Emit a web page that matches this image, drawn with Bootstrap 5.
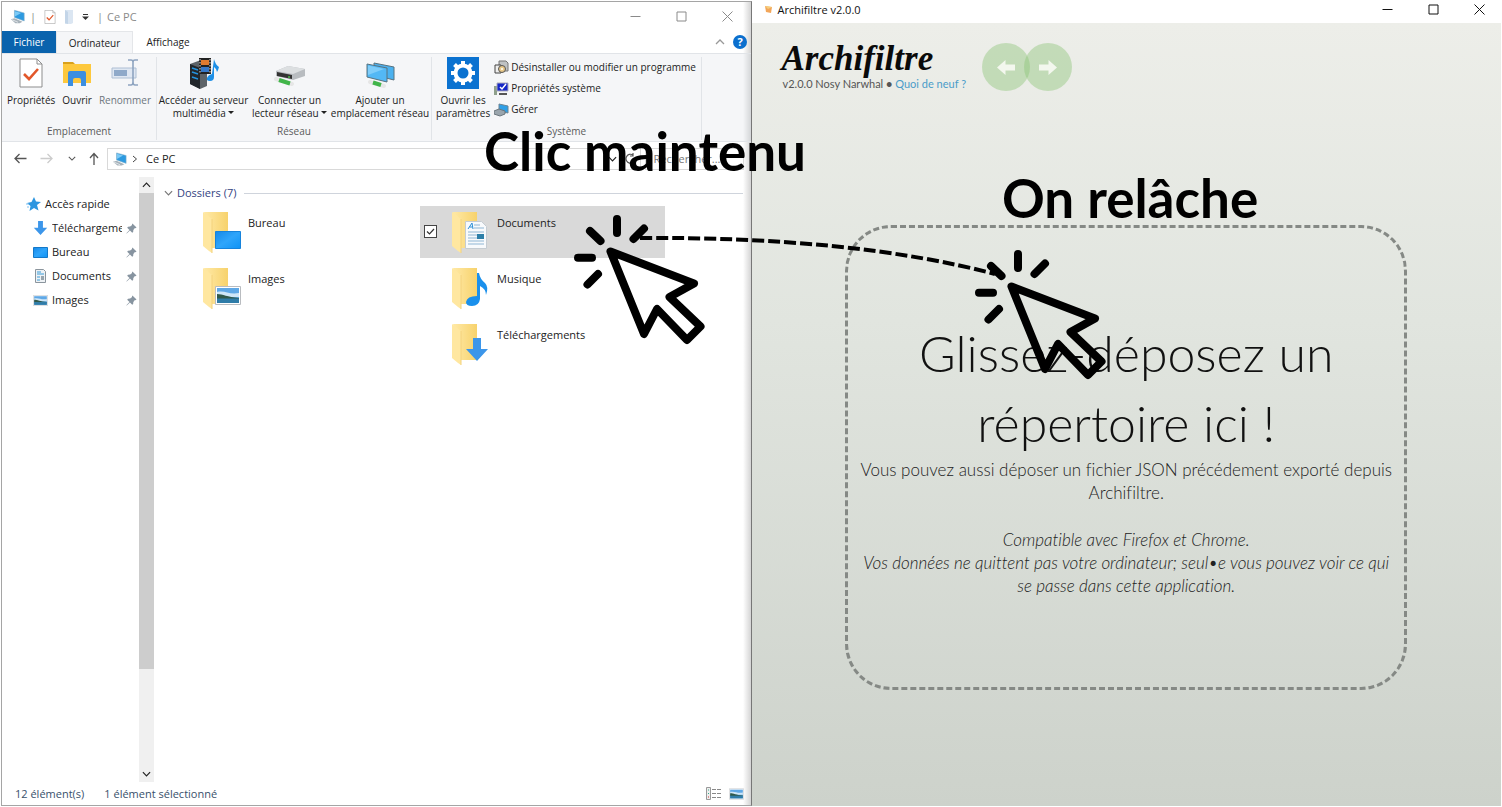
<!DOCTYPE html>
<html lang="fr">
<head>
<meta charset="utf-8">
<meta name="viewport" content="width=device-width, initial-scale=1">
<title>Archifiltre – glisser-déposer un répertoire</title>
<link href="https://cdn.jsdelivr.net/npm/bootstrap@5.3.0/dist/css/bootstrap.min.css" rel="stylesheet">
<style>
  body { font-family: "Open Sans", "Noto Sans", sans-serif; font-size: 11px; line-height: 16px; color: #222; background: #fff; }
  button { border: 0; background: none; padding: 0; color: inherit; }
  svg { display: block; flex: none; }
  a { text-decoration: none; color: inherit; }
  .screen { height: 100vh; padding: 0 0 1px 1px; }

  /* Explorateur */
  .explorer { border: 1px solid #a5a5a5; border-right-color: #777; margin-top: 1px; background: linear-gradient(to left, #d4d4d4, #fff 8px); }
  .titlebar { height: 29px; color: #8a8a8a; }
  .win-btn { width: 46px; height: 18px; display: grid; place-items: center; }
  .tabs { height: 22px; font-size: 10px; }
  .tab-item { display: grid; place-items: center; height: 22px; }
  .tab-file { width: 54px; background: #0a63ad; color: #fff; }
  .tab-on { width: 77px; background: #f5f6f8; border: 1px solid #e4e6e9; border-bottom: 0; }
  .tab-view { width: 70px; }
  .ribbon { height: 89px; font-size: 10px; line-height: 13px; background: linear-gradient(to left, #d4d6d8, #f5f6f8 8px); border: solid #e1e4e8; border-width: 1px 0; padding-top: 3px; }
  .rgroup { border-right: 1px solid #e1e4e8; height: 83px; }
  .rgroup-name { color: #5b5b5b; height: 15px; }
  .rbtn { display: flex; flex-direction: column; align-items: center; white-space: nowrap; }
  .rbtn svg { margin-bottom: 5px; }
  .g-place { width: 155px; } .g-net { width: 275px; } .g-sys { width: 270px; }
  .rline { height: 21px; gap: 2px; white-space: nowrap; }
  .caret-s { display: inline-block; border: 3px solid transparent; border-top-color: #222; border-bottom: 0; vertical-align: 3px; }
  .addr-row { height: 33px; padding: 0 7px 0 11px; }
  .addr-nav { width: 86px; color: #555; }
  .field-box { height: 22px; border: 1px solid #d9d9d9; background: #fff; }
  .search-box { width: 99px; color: #777; padding: 0 8px; outline: 0; }
  .search-box::placeholder { color: #777; }
  .panes { min-height: 0; padding-top: 2px; }
  .side { width: 136px; padding-top: 15px; }
  .side-item { height: 24px; gap: 4px; padding: 0 4px 0 31px; }
  .side-top { padding-left: 24px; }
  .side-name { overflow: hidden; white-space: nowrap; width: 70px; flex: none; }
  .scroll-v { width: 15px; background: #f0f0f0; margin-left: 1px; }
  .scroll-v button { height: 16px; display: grid; place-items: center; flex: none; }
  .thumb { background: #cdcdcd; height: 83%; }
  .files { padding: 6px 8px 0 10px; }
  .files h2 { font-size: 11px; line-height: 20px; color: #34437f; margin: 0; font-weight: 400; }
  .files hr { margin: 0; border-color: #cfd4dc; opacity: 1; }
  .tiles { display: grid; grid-template-columns: repeat(2, 245px); gap: 4px; padding: 3px 0 0 7px; }
  .tile { height: 52px; padding: 6px 0 0 4px; }
  .tile-on { background: #d9d9d9; }
  .tile-check { width: 13px; height: 13px; margin: 13px 15px 0 0; appearance: none; flex: none; }
  .tile-check:checked { border: 1px solid #444; background: #fff url("data:image/svg+xml,%3Csvg xmlns='http://www.w3.org/2000/svg' viewBox='0 0 11 11'%3E%3Cpath d='M2 5.5l2.5 2.5 4.5-5' fill='none' stroke='%23333' stroke-width='1.2'/%3E%3C/svg%3E"); }
  .tile span { padding-top: 3px; margin-left: 7px; }
  .tile-last { grid-column: 2; }
  .status { height: 23px; color: #39506b; padding: 0 7px 0 13px; }

  /* Archifiltre */
  .app-bar { height: 23px; background: #fff; color: #111; padding-bottom: 4px; }
  .app-bar > svg { margin: 0 5px 0 12px; }
  .app-body { background: linear-gradient(#edeee9, #e1e5df 38%, #cdd2cb); margin-right: 1px; }
  .app-font { font-family: Lato, "Open Sans", sans-serif; font-variant-ligatures: none; }
  .brand-name { font: italic 900 35px/36px "Liberation Serif", serif; color: #0a0a0a; margin: 0; }
  .brand-box { padding: 18px 0 0 30px; }
  .brand-sub { font-size: 11px; line-height: 14px; color: #555; padding-left: 1px; }
  .brand-sub a { color: #4a9cc9; }
  .round { width: 48px; height: 48px; border-radius: 50%; background: rgba(139, 195, 116, .42); display: grid; place-items: center; }
  .round + .round { margin-left: -6px; }
  .drop { width: 75%; height: 465px; margin: 134px auto 0; border: 3px dashed #858985; border-radius: 46px; text-align: center; color: #222; }
  .drop h1 { font-size: 50px; line-height: 70px; font-weight: 300; color: #111; margin: 0; }
  .drop p { font-size: 17px; font-weight: 300; line-height: 23px; margin: 0 0 24px; white-space: nowrap; }
  .drop p:last-child { margin: 0; }

  .guide { position: absolute; inset: 0; width: 100%; height: 100%; pointer-events: none; }
  .guide text { font: 700 53px Lato, sans-serif; }
</style>
</head>
<body>
<svg width="0" height="0" class="position-absolute" aria-hidden="true">
  <defs>
    <linearGradient id="gf" x1="0" x2="1"><stop offset="0" stop-color="#ffe9a6"/><stop offset="1" stop-color="#f7d26c"/></linearGradient>
    <linearGradient id="gb" x2="1" y2="1"><stop offset="0" stop-color="#1689e8"/><stop offset=".5" stop-color="#2fa5fb"/><stop offset="1" stop-color="#0f93f5"/></linearGradient>
    <symbol id="folder" viewBox="0 0 38 42"><path d="M1 0h24v36H9z" fill="url(#gf)"/><path d="M0 0l9 7v34l-3-2-6-5z" fill="#ffe7a0"/><path d="M9 7v34" stroke="#f3d27c"/></symbol>
    <symbol id="pic" viewBox="0 0 26 19"><path fill="#fff" stroke="#b9bcc0" d="M.5.5h25v18H.5z"/><path fill="#5fa8e6" d="M2 2h22v15H2z"/><path fill="#cfe6f7" d="M2 6c8-2 12 3 22 1v4H2z"/><path fill="#31594a" d="M2 8c6 0 10 3 22 4v1H2z"/><path fill="#2f7ca8" d="M2 12.500h22V17H2z"/></symbol>
    <symbol id="pc" viewBox="0 0 18 16"><path d="M5 1l11 3v9L5 9z" fill="#2d9ae0" stroke="#8fb2c6" stroke-width=".6"/><path d="M5.500 2l7 2-7 4z" fill="#7ccaf6"/><path d="M1 11l4-1 9 4-3 1.500H6z" fill="#a7b2ba"/><path d="M2 11.500l7 3" stroke="#e6eaed"/></symbol>
    <symbol id="note-check" viewBox="0 0 24 30"><path d="M1 1h17l5 5v23H1z" fill="#fff" stroke="#8d8d8d"/><path d="M18 1v5h5" fill="none" stroke="#8d8d8d"/><path d="M5 16l5 5 9-10" fill="none" stroke="#e2572a" stroke-width="2.600"/></symbol>
    <symbol id="down" viewBox="0 0 22 23"><path d="M7 0h8v11h7L11 23 0 11h7z" fill="#3c96ea"/></symbol>
    <symbol id="pin" viewBox="0 0 12 12"><path d="M7 .5L11.500 5l-1.300.6-.5-.2L8 7.500l-.2 2.300-1 .9-2.500-2.600L.8 11.500l-.4-.4L3.800 7.600 1.300 5.200l.9-1 2.300-.3 2.200-1.700-.2-.5z" fill="#8794a0"/></symbol>
    <symbol id="mini" viewBox="0 0 11 11"><path d="M.5 5.500h10" fill="none" stroke="currentColor"/></symbol>
    <symbol id="maxi" viewBox="0 0 11 11"><path d="M1 1h9v9H1z" fill="none" stroke="currentColor"/></symbol>
    <symbol id="clos" viewBox="0 0 11 11"><path d="M.5.5l10 10M10.500.5l-10 10" fill="none" stroke="currentColor"/></symbol>
    <symbol id="chev" viewBox="0 0 10 6"><path d="M1 1l4 4 4-4" fill="none" stroke="currentColor" stroke-width="1.300"/></symbol>
    <symbol id="arr" viewBox="0 0 13 11"><path d="M13 5.500H1.500M6 1L1.500 5.500 6 10" fill="none" stroke="currentColor" stroke-width="1.300"/></symbol>
    <symbol id="bigarr" viewBox="0 0 18 15"><path d="M0 7.500L8.500 0v4.500H18v6H8.500V15z" fill="#f3f7ee"/></symbol>
    <symbol id="click" viewBox="570 210 140 140" overflow="visible"><g fill="none" stroke="#000" stroke-width="8" stroke-linecap="round" stroke-linejoin="round"><path d="M610.500 251.500L694 283.500l-24.500 13.500 31 29.500-13.500 13.500-30-31-13 25z"/><path d="M617 219v14M644 228.500L633.500 239M590 231l10.500 10M578 257.700h14M598 274l-10.500 10.500"/></g></symbol>
  </defs>
</svg>

<main class="screen d-flex position-relative">
  <section class="explorer w-50 d-flex flex-column flex-shrink-0" aria-label="Explorateur de fichiers">
    <header class="titlebar d-flex align-items-center">
      <svg width="16" height="15" class="ms-2"><use href="#pc"/></svg>
      <span class="ms-1">|</span>
      <svg width="12" height="14" class="ms-2"><use href="#note-check"/></svg>
      <svg width="10" height="14" class="ms-2"><path d="M1 0h8v13l-2 1H1z" fill="#dbe6f2"/><path d="M1 0l3 2v12l-3-1z" fill="#c3d5e8"/></svg>
      <svg width="7" height="7" class="ms-2"><path d="M1 1.500h5" stroke="#333"/><path d="M0 3.500h7L3.500 7z" fill="#333"/></svg>
      <span class="ms-2">|</span><span class="ms-1">Ce PC</span>
      <div class="ms-auto d-flex">
        <button class="win-btn" aria-label="Réduire"><svg width="11" height="11"><use href="#mini"/></svg></button>
        <button class="win-btn" aria-label="Agrandir"><svg width="11" height="11"><use href="#maxi"/></svg></button>
        <button class="win-btn" aria-label="Fermer"><svg width="11" height="11"><use href="#clos"/></svg></button>
      </div>
    </header>
    <nav class="tabs d-flex align-items-center">
      <a href="#" class="tab-item tab-file">Fichier</a>
      <a href="#" class="tab-item tab-on">Ordinateur</a>
      <a href="#" class="tab-item tab-view">Affichage</a>
      <button class="ms-auto me-2" aria-label="Réduire le ruban"><svg width="10" height="6" style="transform:rotate(180deg)" color="#999"><use href="#chev"/></svg></button>
      <button class="me-1" aria-label="Aide"><svg width="14" height="14"><circle cx="7" cy="7" r="7" fill="#0b6fce"/><text x="7" y="11" text-anchor="middle" font-size="11" font-weight="700" fill="#fff">?</text></svg></button>
    </nav>
    <div class="ribbon d-flex">
      <div class="rgroup g-place d-flex flex-column">
        <div class="d-flex justify-content-around flex-grow-1 align-items-start px-1 gap-1">
          <button class="rbtn"><svg width="32" height="32" viewBox="-4 -1 32 32"><use href="#note-check" width="24" height="30"/></svg>Propriétés</button>
          <button class="rbtn"><svg width="32" height="32" viewBox="0 0 32 32"><path d="M2 5h10l3 3H2z" fill="#d9a11d"/><path d="M2 7h28v19H2z" fill="#fdc83d"/><path d="M7 29V16q0-2 2-2h14q2 0 2 2v13h-5v-6q0-2-2-2h-4q-2 0-2 2v6z" fill="#3b8ee0"/></svg>Ouvrir</button>
          <button class="rbtn text-secondary"><svg width="32" height="32" viewBox="0 0 32 32"><path d="M3 11h24v10H3z" fill="#dfe7f2" stroke="#aebfd4"/><path d="M5 13h13v6H5z" fill="#8fa9c9"/><path d="M19 3h3q2 0 2 2v20q0 3-2 3h-3M29 3h-3q-2 0-2 2v20q0 3 2 3h3" fill="none" stroke="#8ea4c0" stroke-width="1.600"/></svg>Renommer</button>
        </div>
        <div class="rgroup-name text-center">Emplacement</div>
      </div>
      <div class="rgroup g-net d-flex flex-column">
        <div class="d-flex justify-content-around flex-grow-1 align-items-start">
          <button class="rbtn"><svg width="32" height="32" viewBox="0 0 32 32"><path d="M2 7l11-4 6 3v23l-7 3-10-5z" fill="#5d6368"/><path d="M2 7l10 4v21L2 27z" fill="#22272c"/><path d="M4 11l6 2M4 15l6 2M4 20l6 2" stroke="#2494e0" stroke-width="1.500"/><path d="M11 1h12v16H11z" fill="#222"/><path d="M13 3h8v5h-8z" fill="#e07b30"/><path d="M13 10h8v5h-8z" fill="#3779c9"/><path d="M12 2v14M22 2v14" stroke="#ddd" stroke-dasharray="1.500 1.500"/><path d="M26 2q1 5 5 8-1 4-2 5 0-3-3-5v10q0 4-4 4t-3-3 5-4z" fill="#1d8fe6"/></svg><span>Accéder au serveur<br>multimédia <i class="caret-s"></i></span></button>
          <button class="rbtn"><svg width="32" height="32" viewBox="0 0 32 32"><path d="M2 14l12-5 17 3v7l-12 4-17-4z" fill="#b8bcc0"/><path d="M2 14l12-5 17 3-12 5z" fill="#dcdfe1"/><path d="M3 15l15 3v4L3 19z" fill="#333"/><path d="M14 20h2" stroke="#5f5"/><path d="M2 22l16 5" stroke="#e6e6e6" stroke-width="4" stroke-linecap="round"/><path d="M5 23l11 3.500" stroke="#41b54a" stroke-width="4"/></svg><span>Connecter un<br>lecteur réseau <i class="caret-s"></i></span></button>
          <button class="rbtn"><svg width="32" height="32" viewBox="0 0 32 32"><path d="M10 6l20 4v13L10 18z" fill="#4bb1ef" stroke="#58727f"/><path d="M3 7l20 4v14L3 20z" fill="#53b8f5" stroke="#58727f"/><path d="M4 8.500l16 3.500L4 18z" fill="#7fcdfa"/><path d="M6 25l14 4" stroke="#e6e6e6" stroke-width="4" stroke-linecap="round"/><path d="M9 25.500l8 2.500" stroke="#41b54a" stroke-width="4"/></svg><span>Ajouter un<br>emplacement réseau</span></button>
        </div>
        <div class="rgroup-name text-center">Réseau</div>
      </div>
      <div class="rgroup g-sys d-flex flex-column">
        <div class="d-flex flex-grow-1 align-items-start ps-1 gap-1">
          <button class="rbtn"><svg width="32" height="32" viewBox="0 0 32 32"><path fill="#0b72d0" d="M0 0h32v32H0z"/><g stroke="#fff" fill="none"><circle cx="16" cy="16" r="7.500" stroke-width="4"/><path d="M16 4v4M16 24v4M4 16h4M24 16h4M7.500 7.500l3 3M21.500 21.500l3 3M24.500 7.500l-3 3M10.500 21.500l-3 3" stroke-width="4"/></g></svg><span>Ouvrir les<br>paramètres</span></button>
          <div>
            <button class="rline d-flex align-items-center"><svg width="15" height="15" viewBox="0 0 15 15"><path d="M5 1h7l2 2v8H5z" fill="#bfc2c4" stroke="#777"/><path d="M1 5h6v8H1z" fill="#eee" stroke="#444"/><circle cx="8" cy="9" r="3.500" fill="#e9c98a" stroke="#555"/><circle cx="8" cy="9" r="1" fill="#fff"/></svg>Désinstaller ou modifier un programme</button>
            <button class="rline d-flex align-items-center"><svg width="15" height="15" viewBox="0 0 15 15"><path d="M0 5h3v9H0z" fill="#8fa08c"/><path d="M3 2h11v8H3z" fill="#1526c8" stroke="#aab"/><path d="M6 6l2 2 4-5" stroke="#fff" fill="none" stroke-width="1.500"/><path d="M5 12h8v2H5z" fill="#555"/></svg>Propriétés système</button>
            <button class="rline d-flex align-items-center"><svg width="15" height="15" viewBox="0 0 15 15"><path d="M5 2l9 2v7L5 9z" fill="#2f9fe6" stroke="#6a8494"/><path d="M0 9l5-2 6 2v3l-5 2-6-2z" fill="#9aa5ad" stroke="#6b767d"/></svg>Gérer</button>
          </div>
        </div>
        <div class="rgroup-name text-center">Système</div>
      </div>
    </div>
    <div class="addr-row d-flex align-items-center gap-2">
      <div class="addr-nav d-flex align-items-center justify-content-between flex-shrink-0">
        <button aria-label="Précédent"><svg width="14" height="11"><use href="#arr"/></svg></button>
        <button aria-label="Suivant"><svg width="14" height="11" style="transform:scaleX(-1)" color="#ccc"><use href="#arr"/></svg></button>
        <button aria-label="Récents"><svg width="8" height="5"><use href="#chev"/></svg></button>
        <button aria-label="Dossier parent"><svg width="10" height="13"><path d="M5 13V1.500M1 6l4-4.500L9 6" fill="none" stroke="currentColor" stroke-width="1.300"/></svg></button>
      </div>
      <div class="d-flex flex-grow-1 gap-1">
        <div class="field-box d-flex align-items-center flex-grow-1 ps-1">
          <svg width="16" height="14"><use href="#pc"/></svg>
          <svg width="6" height="8" class="mx-1"><path d="M1 1l3.500 3L1 7" fill="none" stroke="#444"/></svg>
          <a href="#" class="ms-1">Ce PC</a>
          <svg width="9" height="6" class="ms-auto me-2"><use href="#chev"/></svg>
          <svg width="11" height="12" class="me-1"><path d="M8 2a4.500 4.500 0 1 0 2 4M8 0v3H5" fill="none" stroke="#555" stroke-width="1.200"/></svg>
        </div>
        <input type="search" class="field-box search-box" placeholder="Rechercher..." aria-label="Rechercher">
      </div>
    </div>
    <div class="panes d-flex flex-grow-1">
      <nav class="side flex-shrink-0">
        <a href="#" class="side-item side-top d-flex align-items-center"><svg width="15" height="14" viewBox="0 0 15 14"><path d="M8 0l2 4.500 5 .5-4 3 1.500 5.500L8 11l-4.500 3L4.500 9 1 6l4.500-1z" fill="#2d96e0"/><path d="M0 7h3M1 10h2" stroke="#7cc0f0"/></svg>Accès rapide</a>
        <a href="#" class="side-item d-flex align-items-center"><svg width="15" height="14"><use href="#down"/></svg><span class="side-name">Téléchargements</span><svg width="11" height="11"><use href="#pin"/></svg></a>
        <a href="#" class="side-item d-flex align-items-center"><svg width="15" height="11"><path fill="url(#gb)" stroke="#1478c8" d="M.5.500h14v10H.5z"/></svg><span class="side-name">Bureau</span><svg width="11" height="11"><use href="#pin"/></svg></a>
        <a href="#" class="side-item d-flex align-items-center"><svg width="15" height="14"><path d="M2.500.5h8l2 2v11h-10z" fill="#eef2f5" stroke="#8b959d"/><path d="M4 3h4M4 5h7M4 8h3M4 11h3" stroke="#3a9cd8"/><path d="M8 7h3v4H8z" fill="#98a5ae"/></svg><span class="side-name">Documents</span><svg width="11" height="11"><use href="#pin"/></svg></a>
        <a href="#" class="side-item d-flex align-items-center"><svg width="15" height="11"><use href="#pic"/></svg><span class="side-name">Images</span><svg width="11" height="11"><use href="#pin"/></svg></a>
      </nav>
      <div class="scroll-v d-flex flex-column flex-shrink-0">
        <button aria-label="Défiler vers le haut"><svg width="9" height="6" style="transform:rotate(180deg)"><use href="#chev"/></svg></button>
        <div class="flex-grow-1"><div class="thumb"></div></div>
        <button aria-label="Défiler vers le bas"><svg width="9" height="6"><use href="#chev"/></svg></button>
      </div>
      <div class="files flex-grow-1">
        <div class="d-flex align-items-center gap-1">
          <svg width="9" height="6" color="#777"><use href="#chev"/></svg>
          <h2>Dossiers (7)</h2>
          <hr class="flex-grow-1 ms-1">
        </div>
        <div class="tiles">
          <label class="tile d-flex"><input type="checkbox" class="tile-check"><svg width="38" height="42"><use href="#folder"/><path d="M12.500 19.500h25v17h-25z" fill="url(#gb)" stroke="#1683dc"/></svg><span>Bureau</span></label>
          <label class="tile tile-on d-flex"><input type="checkbox" class="tile-check" checked><svg width="38" height="42"><use href="#folder"/><path d="M13.500 9.500h16l5 5v22h-21z" fill="#f8fafc" stroke="#c5ccd2"/><path d="M16 17l4-6 1 6M17.500 15h3" stroke="#2b8ed6" fill="none"/><path d="M22 13h6M22 16h10M16 20h16M16 23h9M16 26h9M16 29h16M16 32h16" stroke="#8fb6d4"/><path d="M25 22h7v5h-7z" fill="#2d7fa8"/></svg><span>Documents</span></label>
          <label class="tile d-flex"><input type="checkbox" class="tile-check"><svg width="38" height="42"><use href="#folder"/><use href="#pic" x="12" y="18" width="26" height="19"/></svg><span>Images</span></label>
          <label class="tile d-flex"><input type="checkbox" class="tile-check"><svg width="38" height="42"><use href="#folder"/><path d="M25 5h2q1 6 6 10 4 4 1 12 0-6-6-9v13q-1 7-8 7-6 0-6-4 1-6 11-6z" fill="#1a90ec"/></svg><span>Musique</span></label>
          <label class="tile tile-last d-flex"><input type="checkbox" class="tile-check"><svg width="38" height="42"><use href="#folder"/><use href="#down" x="14" y="14" width="22" height="23"/></svg><span>Téléchargements</span></label>
        </div>
      </div>
    </div>
    <footer class="status d-flex align-items-center">
      <span>12 élément(s)</span><span class="ms-3 ps-1">1 élément sélectionné</span>
      <button class="ms-auto me-2" aria-label="Détails"><svg width="15" height="13"><path d="M.5.500h4v12h-4z" fill="#eee" stroke="#999"/><path d="M6 2.500h4M11 2.500h4M6 6.500h4M11 6.500h4M6 10.500h4M11 10.500h4" stroke="#888"/><path d="M2 3h1M2 6.500h1" stroke="#3a8"/><path d="M2 10h1" stroke="#c33"/></svg></button>
      <button aria-label="Grandes icônes"><svg width="15" height="12"><use href="#pic"/></svg></button>
    </footer>
  </section>

  <section class="flex-grow-1 d-flex flex-column" aria-label="Archifiltre">
    <header class="app-bar d-flex align-items-center">
      <svg width="9" height="9"><path d="M1 1l7 1-1 6-5-1z" fill="#f2a65a"/><path d="M1 1l3 3 4-2z" fill="#f6cf7d"/></svg>
      <span>Archifiltre v2.0.0</span>
      <div class="ms-auto d-flex">
        <button class="win-btn" aria-label="Réduire"><svg width="11" height="11"><use href="#mini"/></svg></button>
        <button class="win-btn" aria-label="Agrandir"><svg width="11" height="11"><use href="#maxi"/></svg></button>
        <button class="win-btn" aria-label="Fermer"><svg width="11" height="11"><use href="#clos"/></svg></button>
      </div>
    </header>
    <div class="app-body app-font flex-grow-1">
      <div class="d-flex align-items-start">
        <div class="brand-box">
          <h2 class="brand-name">Archifiltre</h2>
          <div class="brand-sub">v2.0.0 Nosy Narwhal <b>•</b> <a href="#">Quoi de neuf ?</a></div>
        </div>
        <div class="d-flex ms-3 mt-3 pt-1">
          <button class="round" aria-label="Annuler"><svg width="18" height="15"><use href="#bigarr"/></svg></button>
          <button class="round" aria-label="Rétablir"><svg width="18" height="15" style="transform:scaleX(-1)"><use href="#bigarr"/></svg></button>
        </div>
      </div>
      <div class="drop d-flex flex-column justify-content-center">
        <h1>Glissez-déposez un<br>répertoire ici !</h1>
        <p>Vous pouvez aussi déposer un fichier JSON précédement exporté depuis<br>Archifiltre.</p>
        <p class="fst-italic">Compatible avec Firefox et Chrome.<br>Vos données ne quittent pas votre ordinateur; seul•e vous pouvez voir ce qui<br>se passe dans cette application.</p>
      </div>
    </div>
  </section>

  <svg class="guide" viewBox="0 0 1502 807">
    <path d="M640 238C780 237 900 249 995 274" fill="none" stroke="#000" stroke-width="4" stroke-dasharray="12 4"/>
    <use href="#click" x="570" y="210" width="140" height="140"/>
    <use href="#click" x="971" y="245" width="140" height="140"/>
    <text x="484" y="171">Clic maintenu</text>
    <text x="1002" y="218">On relâche</text>
  </svg>
</main>
<script src="https://cdn.jsdelivr.net/npm/bootstrap@5.3.0/dist/js/bootstrap.bundle.min.js"></script>
</body>
</html>
